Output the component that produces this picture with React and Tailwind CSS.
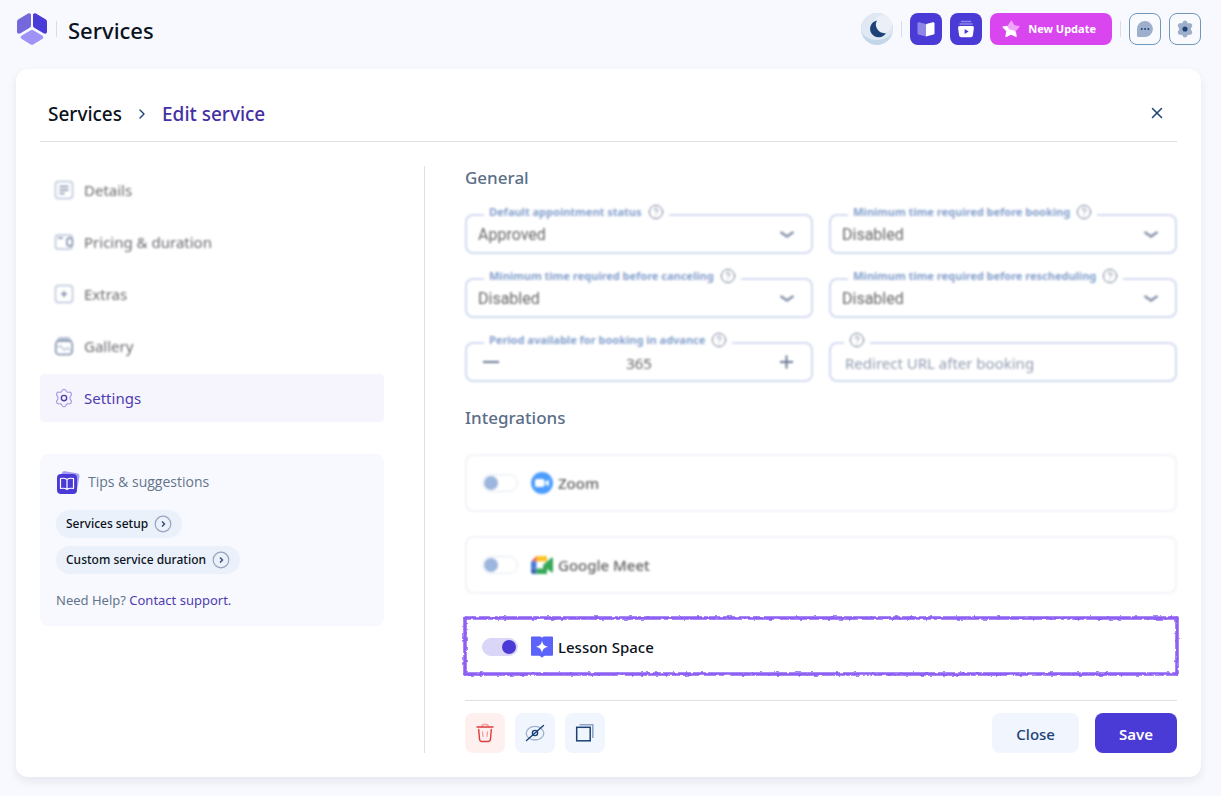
import { useState } from "react"
import { ChevronRight, CircleHelp, X } from "lucide-react"

const options = ["Approved", "Pending", "Disabled"]

export default function App() {
  const [days, setDays] = useState(365)

  return (
    <div className="min-h-screen bg-[#f7f9fe] pl-4 pr-5 pb-4 font-['Noto_Sans','Open_Sans',sans-serif] text-[#0b1220]">

      {/* Top bar */}
      <header className="flex h-[58px] items-center justify-between">
        <div className="flex items-center">
          <Logo />
          <span className="ml-2 mr-[11px] h-4 w-px bg-[#d8dde6]" />
          <h1 className="pt-0.5 text-[22px] font-medium leading-7">Services</h1>
        </div>
        <div className="flex items-center gap-2">
          <button aria-label="Dark mode" className="h-8 w-8">
            <MoonIcon />
          </button>
          <span className="h-4 w-px bg-[#d8dde6]" />
          <button aria-label="Documentation" className="flex h-8 w-8 items-center justify-center rounded-lg bg-[#4a3ad6]">
            <svg width="18" height="18" viewBox="0 0 18 18">
              <path d="M.5 3.600c0-.9.7-1.500 1.600-1.300L9 4v12.500L1.500 14.600c-.6-.2-1-.6-1-1.200z" fill="#8f86ea" />
              <path d="M17.500 3.600c0-.9-.7-1.500-1.600-1.300L11 3.400C9.500 3.800 9 4.300 9 5v11.500l7.500-1.900c.6-.2 1-.6 1-1.200z" fill="#fff" />
            </svg>
          </button>
          <button aria-label="Video tutorials" className="flex h-8 w-8 items-center justify-center rounded-lg bg-[#4a3ad6]">
            <svg width="18" height="18" viewBox="0 0 18 18">
              <path d="M4.500 1.500h9M3 4h12" stroke="#8f86ea" strokeWidth="1.400" strokeLinecap="round" />
              <path d="M2.800 6h12.400c1.100 0 1.900.9 1.700 2l-1 7.200c-.2 1.200-1 2-2.200 2H4.300c-1.200 0-2-.8-2.200-2l-1-7.200C.9 6.900 1.700 6 2.800 6z" fill="#fff" />
              <path d="M7.600 9v5l4-2.500z" fill="#4a3ad6" />
            </svg>
          </button>
          <button className="flex h-8 items-center gap-2 rounded-lg bg-[#d946ef] pl-3 pr-4 text-[11px] font-bold text-white">
            <svg width="18" height="18" viewBox="0 0 18 18">
              <path d="M9.500 1.200L12 5.700l5 1-3.600 3.900.6 5.700L9 14l-4.900 2.400.8-5.600L1.200 7l5-.9z" fill="#f0a5fa" stroke="#f0a5fa" strokeWidth="1.200" strokeLinejoin="round" />
              <path d="M1.200 7l3.600-.5c.8 2 2 4 4.600 4 2 0 3.300.7 4 2.500l.6 3.300L9 14l-4.900 2.400.8-5.600z" fill="#fff" stroke="#fff" strokeWidth="1.200" strokeLinejoin="round" />
            </svg>
            New Update
          </button>
          <span className="h-4 w-px bg-[#d8dde6]" />
          <button aria-label="Messages" className="flex h-8 w-8 items-center justify-center rounded-lg border border-[#6f97bb] bg-[#f8fafe]">
            <svg width="18" height="18" viewBox="0 0 18 18">
              <path d="M9 1a8 8 0 1 1-.2 16H2.500c-.9 0-1.500-.6-1.500-1.500V9A8 8 0 0 1 9 1z" fill="#9dafcb" />
              <path d="M5.700 9h.1M9 9h.1M12.300 9h.1" stroke="#1b4376" strokeWidth="1.800" strokeLinecap="round" />
            </svg>
          </button>
          <button aria-label="Settings" className="flex h-8 w-8 items-center justify-center rounded-lg border border-[#6f97bb] bg-[#f8fafe]">
            <svg width="18" height="18" viewBox="0 0 24 24">
              <GearPath fill="#9dafcb" stroke="#9dafcb" />
              <circle cx="12" cy="12" r="3.400" fill="#1b4376" />
            </svg>
          </button>
        </div>
      </header>

      <main className="mt-[11px] rounded-xl bg-white p-6 shadow-[0_4px_10px_rgba(20,30,60,0.08)]">

        {/* Breadcrumb */}
        <div className="flex border-b border-[#dddfe2] pb-2">
          <nav className="flex h-10 flex-1 items-center pl-2 pt-0.5 text-[19px] font-medium">
            <a href="#services">Services</a>
            <ChevronRight size={16} className="mx-3 text-[#1b4376]" />
            <a href="#edit" className="text-[#4430a4]">Edit service</a>
          </nav>
          <button aria-label="Close panel" className="flex h-10 w-10 items-center justify-center text-[#1b4376]">
            <X size={18} />
          </button>
        </div>

        <div className="flex pt-6">
          <Sidebar />

          {/* Settings form */}
          <div className="ml-10 min-w-0 flex-1 border-l border-[#dddfe2] pl-10">
            <h2 className="text-[17px] font-medium leading-6 text-[#5b6e87]">General</h2>

            <div className="mt-6 grid grid-cols-2 gap-x-4 gap-y-6 opacity-90 blur-[1px]">
              <SelectField id="status" label="Default appointment status" value="Approved" />
              <SelectField id="before-booking" label="Minimum time required before booking" value="Disabled" />
              <SelectField id="before-cancel" label="Minimum time required before canceling" value="Disabled" />
              <SelectField id="before-reschedule" label="Minimum time required before rescheduling" value="Disabled" />
              <Field id="period" label="Period available for booking in advance">
                <div className="flex h-full items-center px-3.5 text-[#5a6a88]">
                  <button aria-label="Decrease" onClick={() => setDays(days - 1)}>
                    <svg width="20" height="20" viewBox="0 0 20 20">
                      <path d="M2 10h16" stroke="currentColor" strokeWidth="2" />
                    </svg>
                  </button>
                  <input
                    id="period"
                    className="min-w-0 flex-1 pt-0.5 text-center text-[15px] text-[#555]"
                    value={days}
                    onChange={(e) => setDays(Number(e.target.value) || 0)}
                  />
                  <button aria-label="Increase" onClick={() => setDays(days + 1)}>
                    <svg width="20" height="20" viewBox="0 0 20 20">
                      <path d="M3 10h13M9.500 3.500v13" stroke="currentColor" strokeWidth="2" />
                    </svg>
                  </button>
                </div>
              </Field>
              <Field id="redirect">
                <input
                  id="redirect"
                  aria-label="Redirect URL after booking"
                  placeholder="Redirect URL after booking"
                  className="h-full w-full px-3.5 pt-0.5 text-[15px] placeholder:text-[#8693a8]"
                />
              </Field>
            </div>

            <h2 className="mt-6 text-[17px] font-medium leading-6 text-[#5b6e87]">Integrations</h2>

            <div className="mt-6 flex flex-col gap-6">
              <Integration id="zoom" name="Zoom" icon={<ZoomIcon />} blurred />
              <Integration id="meet" name="Google Meet" icon={<MeetIcon />} blurred />
              <Integration id="lesson" name="Lesson Space" icon={<LessonIcon />} checked />
            </div>

            {/* Actions */}
            <div className="mt-6 flex items-center justify-between border-t border-[#dddfe2] pt-3">
              <div className="flex gap-2.5">
                <button aria-label="Delete" className="flex h-10 w-10 items-center justify-center rounded-lg bg-[#fff0f0]">
                  <svg width="20" height="20" viewBox="0 0 20 20" fill="none" strokeLinecap="round">
                    <path d="M6.500 3.500C7 2 7.500 1.500 8.500 1.500h3c1 0 1.500.5 2 2M7.500 9l.5 4.500M12.500 9l-.5 4.500" stroke="#f0a0a0" strokeWidth="1.300" />
                    <path d="M2 4h16M3.700 6.500l.8 9.500c.1 1.500 1 2.500 2.500 2.500h6c1.500 0 2.400-1 2.500-2.500l.8-9.500" stroke="#dc3b3b" strokeWidth="1.400" />
                  </svg>
                </button>
                <button aria-label="Hide" className="flex h-10 w-10 items-center justify-center rounded-lg bg-[#f0f5fe]">
                  <svg width="20" height="20" viewBox="0 0 20 20" fill="none" strokeLinecap="round">
                    <ellipse cx="10" cy="10.200" rx="8.800" ry="6.800" stroke="#9db2cc" strokeWidth="1.300" />
                    <circle cx="10" cy="10" r="2.600" stroke="#1b4376" strokeWidth="1.400" />
                    <path d="M1.500 17.500L18.500 2.500" stroke="#1b4376" strokeWidth="1.400" />
                  </svg>
                </button>
                <button aria-label="Duplicate" className="flex h-10 w-10 items-center justify-center rounded-lg bg-[#f0f5fe]">
                  <svg width="20" height="20" viewBox="0 0 20 20" fill="none">
                    <path d="M4.500 1.700h13.300v13.300" stroke="#8ea6c4" strokeWidth="1.600" />
                    <rect x="1.700" y="4.300" width="13.500" height="13.500" stroke="#1b4376" strokeWidth="1.500" />
                  </svg>
                </button>
              </div>
              <div className="flex gap-4">
                <button className="h-10 rounded-lg bg-[#f0f5fe] px-6 pt-0.5 text-[15px] font-medium text-[#1b4376]">Close</button>
                <button className="h-10 rounded-lg bg-[#4a3ad6] px-6 pt-0.5 text-[15px] font-semibold text-white">Save</button>
              </div>
            </div>
          </div>
        </div>
      </main>
    </div>
  )
}

function Sidebar() {
  return (
    <aside className="w-[344px] shrink-0">
      <nav className="flex flex-col gap-1">
        <NavItem label="Details">
          <rect x="1.500" y="1.500" width="17" height="17" rx="3" stroke="#b9c3d8" />
          <path d="M6 6.500h8M6 10h8M6 13.500h4" stroke="#7a89a6" />
        </NavItem>
        <NavItem label="Pricing & duration">
          <path d="M15.500 3H4C2.500 3 1.500 4 1.500 5.500v9C1.500 16 2.500 17 4 17h11.500c1.500 0 2.500-.8 2.500-2.500M18 5.500C18 4 17 3 15.500 3" stroke="#b9c3d8" />
          <path d="M4.500 6h4" stroke="#7a89a6" />
          <rect x="13" y="6" width="5.500" height="8" rx="2.500" stroke="#7a89a6" />
        </NavItem>
        <NavItem label="Extras">
          <rect x="1.500" y="1.500" width="17" height="17" rx="3" stroke="#b9c3d8" />
          <path d="M10 7.500v5M7.500 10h5" stroke="#7a89a6" />
        </NavItem>
        <NavItem label="Gallery">
          <path d="M5 2h10M3 4h14" stroke="#a3afc6" />
          <rect x="1.700" y="5" width="16.600" height="13.500" rx="3.500" stroke="#7a89a6" />
          <path d="M2.500 11l4-1 4 4 3-2 4 3" stroke="#b9c3d8" />
        </NavItem>
        <a href="#settings" className="flex h-12 items-center gap-2.5 rounded bg-[#f6f5fd] px-3.5 text-[15px] text-[#4f3db0]">
          <svg width="20" height="20" viewBox="0 0 24 24" fill="none">
            <GearPath fill="none" stroke="#a99fe6" />
            <circle cx="12" cy="12" r="3.200" stroke="#4f3db0" strokeWidth="1.700" />
          </svg>
          <span>Settings</span>
        </a>
      </nav>

      <section className="mt-8 rounded-lg bg-[#f7f9fe] p-4">
        <div className="flex h-6 items-center gap-2 font-['Open_Sans',sans-serif] text-sm text-[#64748b]">
          <svg width="24" height="24" viewBox="0 0 24 24" fill="none">
            <rect x="4.500" y="2" width="18" height="18" rx="3" fill="#a79df0" transform="rotate(10 13 11)" />
            <rect x="1" y="4" width="20" height="20" rx="4" fill="#4a3ad6" />
            <path d="M11 9.500C9.500 8.300 7 8 4.500 8.500v10c2.500-.5 5-.2 6.500 1 1.500-1.200 4-1.500 6.500-1v-10c-2.500-.5-5-.2-6.500 1zM11 9.500v10" stroke="#fff" strokeWidth="1.200" strokeLinejoin="round" />
          </svg>
          Tips &amp; suggestions
        </div>
        <div className="mt-4 flex flex-col items-start gap-2">
          <Tip label="Services setup" />
          <Tip label="Custom service duration" />
        </div>
        <p className="mt-4 text-[13px] leading-5 text-[#64748b]">
          Need Help? <a href="#support" className="text-[#4f3db0]">Contact support.</a>
        </p>
      </section>
    </aside>
  )
}

function NavItem({ label, children }) {
  return (
    <a href="#section" className="flex h-12 items-center gap-2.5 px-3.5 text-[15px] text-[#6a6b70] blur-[1px]">
      <svg width="20" height="20" viewBox="0 0 20 20" fill="none" strokeWidth="1.500" strokeLinecap="round">
        {children}
      </svg>
      <span>{label}</span>
    </a>
  )
}

function Tip({ label }) {
  return (
    <a href="#tip" className="flex h-7 items-center gap-1.5 rounded-full bg-[#eaf1fa] px-2.5 text-xs font-medium">
      {label}
      <svg width="18" height="18" viewBox="0 0 18 18" fill="none">
        <circle cx="9" cy="9" r="7.800" stroke="#98a3bd" strokeWidth="1.200" />
        <path d="M8 6.500L10.500 9 8 11.500" stroke="#33476b" strokeWidth="1.400" />
      </svg>
    </a>
  )
}

function Field({ id, label, children }) {
  return (
    <div className="relative h-10 rounded-lg border-2 border-[#cdd7ee]">
      {children}
      <div className={label
        ? "absolute -top-3 left-[17px] flex items-center gap-1.5 bg-white px-[5px]"
        : "absolute -top-3 left-[13px] flex items-center bg-white px-[5px]"}>
        {label && (
          <label htmlFor={id} className="text-[11px] font-bold leading-4 text-[#7c9acb]">{label}</label>
        )}
        <CircleHelp size={16} strokeWidth={1.5} className="text-[#66758f]" />
      </div>
    </div>
  )
}

function SelectField({ id, label, value }) {
  return (
    <Field id={id} label={label}>
      <select
        id={id}
        defaultValue={value}
        className="h-full w-full appearance-none px-[11px] pt-0.5 font-[Roboto,sans-serif] text-base text-[#555]"
      >
        {options.map((o) => <option key={o}>{o}</option>)}
      </select>
      <svg className="pointer-events-none absolute right-3.5 top-2 text-[#7886a0]" width="20" height="20" viewBox="0 0 20 20" fill="none">
        <path d="M3.500 8l6.500 4.500L16.500 8" stroke="currentColor" strokeWidth="2.500" />
      </svg>
    </Field>
  )
}

function Integration({ id, name, icon, checked, blurred }) {
  return (
    <div className={blurred
      ? "relative flex h-[58px] items-center rounded-lg border-2 border-[#f0f1f8] px-[15px] text-[#444] opacity-85 blur-[1px]"
      : "relative flex h-[58px] items-center px-[17px]"}>
      <input
        id={id}
        type="checkbox"
        role="switch"
        defaultChecked={checked}
        className="h-[18px] w-9 appearance-none rounded-full border border-[#dfe6f4] bg-white p-px before:block before:h-3.5 before:w-3.5 before:rounded-full before:bg-[#8daad9] checked:border-[#dad6f7] checked:bg-[#dad6f7] checked:before:ml-[18px] checked:before:bg-[#4a3ad6]"
      />
      <label htmlFor={id} className="ml-3 flex items-center gap-1 text-[15px] font-medium">
        {icon}
        <span>{name}</span>
      </label>
      {checked && <BrushFrame />}
    </div>
  )
}

// rough crayon outline around the active integration
function BrushFrame() {
  return (
    <svg className="pointer-events-none absolute inset-0 h-full w-full overflow-visible" fill="none">
      <filter id="brush" filterUnits="userSpaceOnUse" x="-10" y="-10" width="110%" height="80">
        <feTurbulence type="fractalNoise" baseFrequency="0.2" numOctaves="2" seed="4" result="noise" />
        <feDisplacementMap in="SourceGraphic" in2="noise" scale="3" xChannelSelector="R" yChannelSelector="G" />
        <feGaussianBlur stdDeviation="0.7" />
      </filter>
      <g filter="url(#brush)" stroke="#8d5ff3" strokeWidth="3.500" strokeLinecap="round">
        <line x1="0" y1="0" x2="100%" y2="0" />
        <line x1="0" y1="56" x2="100%" y2="56" />
        <line x1="0" y1="0" x2="0" y2="56" />
        <line x1="100%" y1="0" x2="100%" y2="56" />
      </g>
    </svg>
  )
}

function GearPath({ fill, stroke }) {
  return (
    <path
      d="M9.500 3.500C10 2 10.800 1.500 12 1.500s2 .5 2.500 2c.5 1.400 1.500 1.900 3 1.600 1.600-.3 2.600.1 3.200 1.200s.4 2.100-.7 3.300c-1 1.100-1 3.700 0 4.800 1.100 1.200 1.300 2.200.7 3.300s-1.600 1.500-3.200 1.200c-1.500-.3-2.500.2-3 1.600-.5 1.500-1.300 2-2.500 2s-2-.5-2.500-2c-.5-1.400-1.500-1.900-3-1.600-1.600.3-2.600-.1-3.200-1.200s-.4-2.100.7-3.300c1-1.100 1-3.700 0-4.800-1.100-1.200-1.300-2.200-.7-3.300s1.600-1.500 3.200-1.200c1.500.3 2.500-.2 3-1.600z"
      fill={fill}
      stroke={stroke}
      strokeWidth="1.500"
      strokeLinejoin="round"
    />
  )
}

function Logo() {
  return (
    <svg width="32" height="32" viewBox="0 0 32 32">
      <path d="M2.500 6.300L11.700.8C13.500-.2 15 .5 15 2.200v10.300c0 1-.4 1.700-1.300 2.200l-9.200 5.500C2.700 21.200 1 20.500 1 18.700V9c0-1.200.5-2.100 1.500-2.700z" fill="#7468dc" />
      <path d="M29.500 6.300L20.300.8C18.500-.2 17 .5 17 2.200v10.300c0 1 .4 1.700 1.300 2.200l9.200 5.500c1.800 1 3.500.3 3.500-1.500V9c0-1.200-.5-2.100-1.500-2.700z" fill="#4a3ad6" />
      <path d="M14.700 17.300c.9-.5 1.700-.5 2.600 0l8.900 5.200c1.500.9 1.500 2.600 0 3.500l-8.600 5.300c-1.100.7-2.100.7-3.200 0L5.800 26c-1.500-.9-1.500-2.600 0-3.500z" fill="#9f93f6" />
    </svg>
  )
}

function MoonIcon() {
  return (
    <svg width="32" height="32" viewBox="0 0 32 32">
      <circle cx="16" cy="16" r="16" fill="#c3d6ea" />
      <path d="M0 16a16 16 0 0 1 32 0c0 6-7 11-16 11S0 22 0 16z" fill="#dfe8f3" />
      <circle cx="22" cy="11" r="9" fill="#ebf0f8" />
      <path d="M16 7.500a8.500 8.500 0 1 0 9 12.500A8.500 8.500 0 0 1 16 7.500z" fill="#1b4376" />
    </svg>
  )
}

function ZoomIcon() {
  return (
    <svg width="24" height="24" viewBox="0 0 24 24">
      <circle cx="12" cy="12" r="11" fill="#2d8cff" />
      <rect x="5" y="8" width="9.500" height="8" rx="2" fill="#fff" />
      <path d="M15.300 11l3.500-2.500v7L15.300 13z" fill="#fff" />
    </svg>
  )
}

function MeetIcon() {
  return (
    <svg width="24" height="24" viewBox="0 0 24 24">
      <path d="M6.500 3H17v5.500H6.500z" fill="#ffba00" />
      <path d="M1 8.500L6.500 3v5.500z" fill="#ea4335" />
      <path d="M1 8.500h5.500v7H1z" fill="#2865d6" />
      <path d="M1 15.500h5.500V21H3c-1 0-2-.8-2-2z" fill="#1c4fb0" />
      <path d="M6.500 15.500H13V12l4-3.500 4.500-3.700c.6-.5 1.500-.1 1.500.7v13c0 .8-.9 1.200-1.500.7L17 16v5H6.500z" fill="#149a3c" />
    </svg>
  )
}

function LessonIcon() {
  return (
    <svg width="24" height="24" viewBox="0 0 24 24">
      <path d="M2 1.500h7.500c1 0 2 .5 2.500 1.200.5-.7 1.500-1.200 2.500-1.200H22c.6 0 1 .4 1 1v17.200c0 .6-.4 1-1 1h-6.500c-1.300 0-2 .6-3.500 2-1.500-1.400-2.200-2-3.500-2H2c-.6 0-1-.4-1-1V2.500c0-.6.4-1 1-1z" fill="#5b63fa" />
      <path d="M12 5.800c.8 3.600 2 5 6 6-4 1-5.200 2.400-6 6-.8-3.600-2-5-6-6 4-1 5.200-2.400 6-6z" fill="#fff" />
    </svg>
  )
}
